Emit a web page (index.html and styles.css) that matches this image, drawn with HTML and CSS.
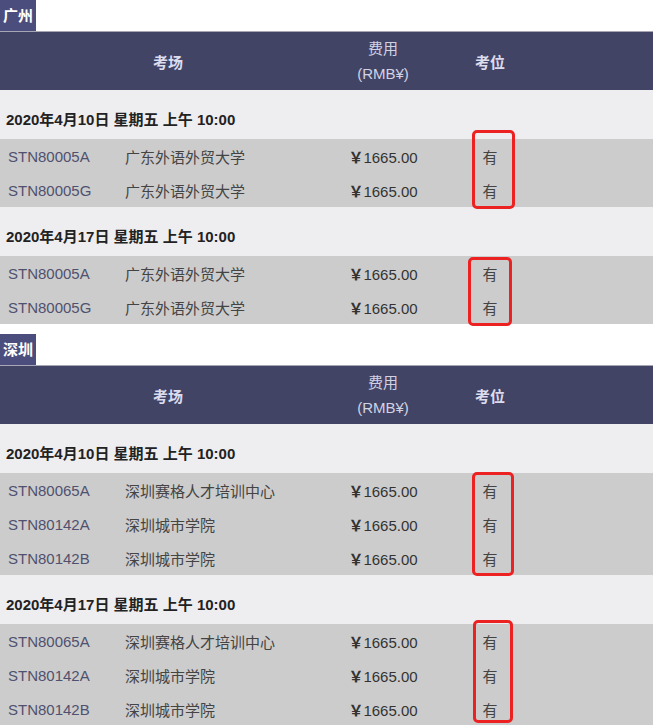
FILE: index.html
```html
<!DOCTYPE html>
<html lang="zh-CN">
<head>
<meta charset="utf-8">
<title>考场</title>
<link rel="stylesheet" href="styles.css">
</head>
<body>
<section class="city">
  <div class="city-label">广州</div>
  <div class="thead">
    <div class="th th-venue">考场</div>
    <div class="th th-fee">费用<br>(RMB¥)</div>
    <div class="th th-seat">考位</div>
  </div>
  <div class="date">2020年4月10日 星期五 上午 10:00</div>
  <div class="group">
    <div class="row"><span class="code">STN80005A</span><span class="venue">广东外语外贸大学</span><span class="fee"><span class="yen">￥</span>1665.00</span><span class="seat">有</span></div>
    <div class="row"><span class="code">STN80005G</span><span class="venue">广东外语外贸大学</span><span class="fee"><span class="yen">￥</span>1665.00</span><span class="seat">有</span></div>
    <div class="mark mark-a"></div>
  </div>
  <div class="date">2020年4月17日 星期五 上午 10:00</div>
  <div class="group">
    <div class="row"><span class="code">STN80005A</span><span class="venue">广东外语外贸大学</span><span class="fee"><span class="yen">￥</span>1665.00</span><span class="seat">有</span></div>
    <div class="row"><span class="code">STN80005G</span><span class="venue">广东外语外贸大学</span><span class="fee"><span class="yen">￥</span>1665.00</span><span class="seat">有</span></div>
    <div class="mark mark-b"></div>
  </div>
</section>
<section class="city city-next">
  <div class="city-label">深圳</div>
  <div class="thead">
    <div class="th th-venue">考场</div>
    <div class="th th-fee">费用<br>(RMB¥)</div>
    <div class="th th-seat">考位</div>
  </div>
  <div class="date">2020年4月10日 星期五 上午 10:00</div>
  <div class="group">
    <div class="row"><span class="code">STN80065A</span><span class="venue">深圳赛格人才培训中心</span><span class="fee"><span class="yen">￥</span>1665.00</span><span class="seat">有</span></div>
    <div class="row"><span class="code">STN80142A</span><span class="venue">深圳城市学院</span><span class="fee"><span class="yen">￥</span>1665.00</span><span class="seat">有</span></div>
    <div class="row"><span class="code">STN80142B</span><span class="venue">深圳城市学院</span><span class="fee"><span class="yen">￥</span>1665.00</span><span class="seat">有</span></div>
    <div class="mark mark-c"></div>
  </div>
  <div class="date">2020年4月17日 星期五 上午 10:00</div>
  <div class="group">
    <div class="row"><span class="code">STN80065A</span><span class="venue">深圳赛格人才培训中心</span><span class="fee"><span class="yen">￥</span>1665.00</span><span class="seat">有</span></div>
    <div class="row"><span class="code">STN80142A</span><span class="venue">深圳城市学院</span><span class="fee"><span class="yen">￥</span>1665.00</span><span class="seat">有</span></div>
    <div class="row"><span class="code">STN80142B</span><span class="venue">深圳城市学院</span><span class="fee"><span class="yen">￥</span>1665.00</span><span class="seat">有</span></div>
    <div class="mark mark-d"></div>
  </div>
</section>
</body>
</html>
```
FILE: styles.css
```css
* { box-sizing: border-box; }
html, body {
  margin: 0;
  padding: 0;
  background: #ffffff;
}
body {
  width: 653px;
  font-family: "Liberation Sans", "Noto Sans CJK SC", sans-serif;
  font-size: 15px;
  color: #333;
}
.city-next { margin-top: 10px; }
.city-label {
  display: inline-block;
  height: 31px;
  line-height: 31px;
  padding: 0 3px;
  background: #4b4e7d;
  color: #ffffff;
  font-weight: bold;
  font-size: 15px;
  vertical-align: top;
}
.thead {
  display: grid;
  grid-template-columns: 336px 94px 120px 1fr;
  height: 59px;
  background: #424465;
  border-top: 1px solid #a6a6b4;
  align-items: center;
}
.th {
  text-align: center;
  color: #dcdcef;
}
.th-venue, .th-seat { font-weight: bold; }
.th-fee {
  font-weight: normal;
  line-height: 25px;
  color: #d2d2e2;
}
.date {
  height: 49px;
  padding-top: 20px;
  padding-left: 6px;
  line-height: 20px;
  background: #eeedf0;
  font-weight: bold;
  color: #222;
}
.group {
  position: relative;
  background: #cccccc;
}
.row {
  display: grid;
  grid-template-columns: 117px 219px 94px 120px 1fr;
  height: 34px;
  align-items: center;
}
.code {
  padding-left: 8px;
  color: #50516f;
}
.venue {
  padding-left: 8px;
  color: #444;
}
.fee {
  text-align: center;
  color: #333;
}
.yen {
  font-family: "Noto Sans CJK SC", sans-serif;
  font-weight: bold;
}
.seat {
  text-align: center;
  color: #444;
}
.mark {
  position: absolute;
  border: 3px solid #ec2222;
  border-radius: 5px;
}
.mark-a { top: -9px; left: 472px; width: 43px; height: 79px; }
.mark-b { top: 1px; left: 468px; width: 44px; height: 69px; }
.mark-c { top: -1px; left: 472px; width: 42px; height: 104px; }
.mark-d { top: -4px; left: 473px; width: 40px; height: 103px; }
```
